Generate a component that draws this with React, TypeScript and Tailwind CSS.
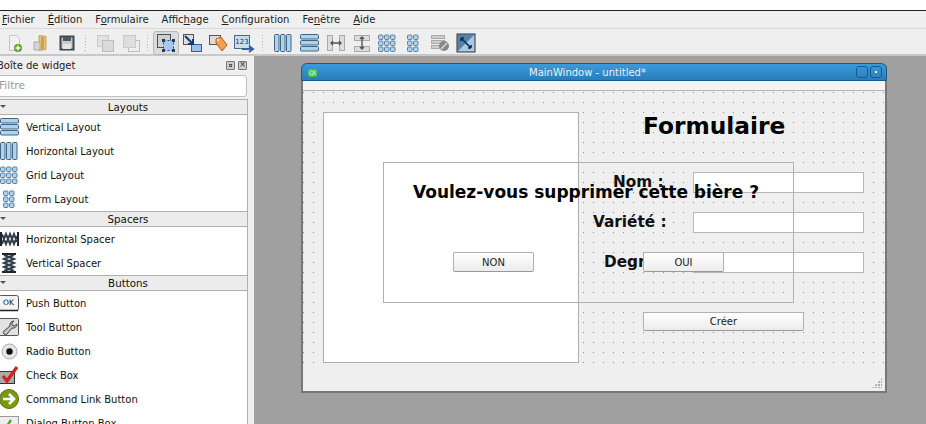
import React from "react";

const S = ({ children, w = 20, h = 20, vb }: { children: React.ReactNode; w?: number; h?: number; vb?: string }) => (
  <svg width={w} height={h} viewBox={vb ?? `0 0 ${w} ${h}`} className="shrink-0">{children}</svg>
);

const VLayout = () => (
  <S>
    {[1, 7, 13].map((y) => <rect key={y} x="0.5" y={y + 0.5} width="18" height="4.5" rx="1" fill="#a9d4f2" stroke="#47627c" />)}
  </S>
);
const HLayout = () => (
  <S>
    {[0, 6, 12].map((x) => <rect key={x} x={x + 0.5} y="1.5" width="4.5" height="17" rx="1" fill="#a9d4f2" stroke="#47627c" />)}
  </S>
);
const Grid = ({ cols = 3, rows = 3, sx }: { cols?: number; rows?: number; sx?: number }) => {
  const cells = [] as React.ReactNode[];
  const start = sx ?? (cols === 3 ? 0 : 3);
  for (let c = 0; c < cols; c++) for (let r = 0; r < rows; r++)
    cells.push(<rect key={`${c}-${r}`} x={start + c * 6 + 0.5} y={1.5 + r * 6 + 0.5} width="4.5" height="4.5" rx="1" fill="#a9d4f2" stroke="#64809a" />);
  return <S>{cells}</S>;
};
const HSpacer = () => (
  <S>
    <rect x="0" y="3" width="2" height="14" fill="#222" /><rect x="17" y="3" width="2" height="14" fill="#222" />
    <path d="M2 5l4 10 4-10 4 10 3-8M2 15l4-10 4 10 4-10 3 8" fill="none" stroke="#2e3d4c" strokeWidth="2" />
  </S>
);
const VSpacer = () => (
  <S>
    <rect x="2" y="0" width="14" height="2" fill="#222" /><rect x="2" y="18" width="14" height="2" fill="#222" />
    <path d="M4 2l10 4-10 4 10 4-10 4M14 2L4 6l10 4-10 4 10 4" fill="none" stroke="#2e3d4c" strokeWidth="2" />
  </S>
);
const PushBtn = () => (
  <S>
    <rect x="-1.5" y="2.5" width="20" height="15" rx="2" fill="#f3f3f3" stroke="#555" />
    <path d="M-1 17.5h19" stroke="#222" strokeWidth="1.5" />
    <text x="8.5" y="12" fontSize="7.5" textAnchor="middle" fontFamily="DejaVu Sans" fill="#111">OK</text>
  </S>
);
const ToolBtn = () => (
  <S>
    <rect x="-1.5" y="1.5" width="20" height="17" rx="1" fill="#e2e2e2" stroke="#555" />
    <path d="M14 4a4 4 0 0 0-4 5l-6 5a2 2 0 0 0 3 3l5-6a4 4 0 0 0 5-4l-3 2-2-1 0-2z" fill="#c4c4c4" stroke="#444" />
  </S>
);
const Radio = () => (
  <S>
    <circle cx="9.5" cy="10.5" r="7.5" fill="#e6e6e6" stroke="#aaa" />
    <circle cx="9.5" cy="10.5" r="3.2" fill="#111" />
  </S>
);
const Check = () => (
  <S>
    <rect x="-0.5" y="6.5" width="15" height="12" fill="#aaa" stroke="#333" />
    <path d="M3 11l4 5 10-14" fill="none" stroke="#d32020" strokeWidth="3.2" />
  </S>
);
const CmdLink = () => (
  <S>
    <circle cx="9" cy="10" r="9.5" fill="#7a9a12" stroke="#55700c" />
    <path d="M3 10h10M9 5l5 5-5 5" fill="none" stroke="#fff" strokeWidth="2.6" />
  </S>
);
const DlgBox = () => (
  <S>
    <rect x="-0.5" y="3.5" width="19" height="17" fill="#eee" stroke="#999" />
    <path d="M2 12l3 4 6-9" fill="none" stroke="#4caf20" strokeWidth="2.4" />
    <path d="M11 13l6 6M17 13l-6 6" stroke="#d33" strokeWidth="2" />
  </S>
);

const NewIc = () => (
  <S>
    <path d="M5.5 2.5h7l3 3v12h-10z" fill="#f1f1f1" stroke="#c4c4c4" />
    <circle cx="14" cy="15" r="4" fill="#5da31f" /><path d="M14 12.5v5M11.5 15h5" stroke="#fff" strokeWidth="1.4" />
  </S>
);
const OpenIc = () => (
  <S>
    <path d="M9 2.5l7 1v13l-7 1z" fill="#e8c67a" stroke="#b8a477" />
    <path d="M4 9h6v8H4z" fill="#d4d4d4" stroke="#aaa" /><path d="M11 4h3v12h-3z" fill="#d5a23f" />
  </S>
);
const SaveIc = () => (
  <S>
    <path d="M3.5 3.5h13v13h-13z" fill="#c8ccd0" stroke="#3e4650" strokeWidth="2" />
    <rect x="6" y="4" width="8" height="4" fill="#50585f" /><rect x="6" y="11" width="8" height="5" fill="#e2e4e6" />
  </S>
);
const CopyIc = () => (
  <S>
    <rect x="2.5" y="2.5" width="11" height="11" fill="#e2e2e2" stroke="#c9c9c9" />
    <rect x="7.5" y="7.5" width="11" height="11" fill="#dadada" stroke="#bdbdbd" />
  </S>
);
const PasteIc = () => (
  <S>
    <rect x="7.5" y="7.5" width="11" height="11" fill="#eee" stroke="#bdbdbd" />
    <rect x="2.5" y="2.5" width="12" height="12" fill="#dedede" stroke="#c9c9c9" />
  </S>
);
const EditWidgets = () => (
  <S>
    <rect x="1.5" y="1.5" width="13" height="13" fill="#d0d0d0" stroke="#48505a" />
    <rect x="7.5" y="7.5" width="10" height="10" fill="#a9c8f0" stroke="#2b4a8c" strokeDasharray="2 2" />
    <g fill="#1c3b78"><rect x="6" y="6" width="3" height="3" /><rect x="16" y="6" width="3" height="3" /><rect x="6" y="16" width="3" height="3" /><rect x="16" y="16" width="3" height="3" /></g>
  </S>
);
const Signal = () => (
  <S>
    <rect x="1.5" y="1.5" width="10" height="10" fill="#ddd" stroke="#555" />
    <rect x="9.5" y="11.5" width="10" height="7" fill="#9cc0e8" stroke="#3a5f92" />
    <path d="M3 3l8 8M11 6v5H6" fill="none" stroke="#123a78" strokeWidth="2" />
  </S>
);
const Buddy = () => (
  <S>
    <rect x="1.5" y="2.5" width="11" height="9" fill="#ddd" stroke="#555" />
    <path d="M8 6l5-2 6 8-5 6-6-8z" fill="#f0a050" stroke="#c25a18" />
    <circle cx="10" cy="7" r="1" fill="#fff" />
  </S>
);
const TabOrder = () => (
  <S w={22}>
    <rect x="1.5" y="2.5" width="15" height="13" fill="#c9dcf0" stroke="#4b6a8d" />
    <text x="9" y="11" fontSize="7" textAnchor="middle" fontFamily="DejaVu Sans" fill="#234">123</text>
    <path d="M9 16h10M16 13l4 3-4 3" fill="none" stroke="#2a62b0" strokeWidth="2" />
  </S>
);
const HSplit = () => (
  <S>
    <rect x="1.5" y="2.5" width="5" height="15" fill="#ddd" stroke="#aaa" /><rect x="13.5" y="2.5" width="5" height="15" fill="#ddd" stroke="#aaa" />
    <path d="M5 10h10M7 8l-2 2 2 2M13 8l2 2-2 2" fill="none" stroke="#555" strokeWidth="1.4" />
  </S>
);
const VSplit = () => (
  <S>
    <rect x="2.5" y="2.5" width="15" height="5" fill="#ddd" stroke="#aaa" /><rect x="2.5" y="13.5" width="15" height="5" fill="#ddd" stroke="#aaa" />
    <path d="M10 4v12M8 6l2-2 2 2M8 14l2 2 2-2" fill="none" stroke="#555" strokeWidth="1.4" />
  </S>
);
const BreakIc = () => (
  <S>
    <rect x="1.5" y="2.5" width="13" height="3" fill="#ccc" stroke="#aaa" />
    <rect x="1.5" y="7.5" width="13" height="3" fill="#ccc" stroke="#aaa" />
    <rect x="1.5" y="12.5" width="11" height="3" fill="#ccc" stroke="#aaa" />
    <circle cx="14" cy="13" r="5" fill="#888" /><path d="M11 16l6-6" stroke="#ddd" strokeWidth="1.4" />
  </S>
);
const Adjust = () => (
  <S>
    <rect x="1" y="1" width="18" height="18" fill="#a8c8e8" stroke="#333" />
    <path d="M1 19V1h18z" fill="#38628c" opacity="0.7" />
    <path d="M5 5l10 10M5 5h3M5 5v3M15 15h-3M15 15v-3" stroke="#07304f" strokeWidth="1.6" fill="none" />
  </S>
);

const Dots = ({ cls }: { cls: string }) => (
  <div className={`h-[17px] w-[3px] bg-[radial-gradient(circle_at_0.5px_0.5px,#b5b5b5_0.71px,transparent_0.71px)] bg-[size:3px_3px] ${cls}`} />
);

const Tool = ({ children, active }: { children: React.ReactNode; active?: boolean }) => (
  <div className={active
    ? "w-[26px] h-[24px] flex items-center justify-center rounded-[3px] border border-[#b8b8b8] bg-[#dcdcdc]"
    : "w-[26px] h-[24px] flex items-center justify-center"}>
    {children}
  </div>
);

const U = ({ children }: { children: React.ReactNode }) => <span className="underline">{children}</span>;

const Section = ({ title }: { title: string }) => (
  <div className="relative h-[13px] flex items-center justify-center pl-[12px] pt-[1px] border-y border-[#b0b0b0] bg-[#ececec] text-[10.3px] text-[#111] box-content">
    <span className="absolute left-[3px] top-[5px] w-0 h-0 border-x-[3px] border-x-transparent border-t-[3px] border-t-[#555]" />
    {title}
  </div>
);

const Item = ({ icon, label }: { icon: React.ReactNode; label: string }) => (
  <div className="h-[24px] flex items-center gap-[6px] pl-[3px] text-[10px] text-[#111]">
    {icon}
    <span>{label}</span>
  </div>
);

const Btn = ({ label, cls }: { label: string; cls: string }) => (
  <div className={`absolute flex items-center justify-center rounded-[2px] border border-[#b0b0b0] border-b-[#999] bg-gradient-to-b from-[#ffffff] to-[#ececec] text-[10px] text-[#222] ${cls}`}>
    {label}
  </div>
);

export default function App() {
  return (
    <div className="w-[926px] h-[424px] overflow-hidden flex flex-col bg-[#efefef] font-['DejaVu_Sans',sans-serif]">
      <div className="h-[10px] bg-white border-b border-[#222] box-content" />
      <div className="h-[16px] flex items-center gap-[13px] pl-[2px] pb-[1px] text-[10px] text-[#222] border-b border-[#d8d8d8] box-content">
        <span><U>F</U>ichier</span>
        <span><U>É</U>dition</span>
        <span>F<U>o</U>rmulaire</span>
        <span>Affic<U>h</U>age</span>
        <span><U>C</U>onfiguration</span>
        <span>Fe<U>n</U>être</span>
        <span><U>A</U>ide</span>
      </div>
      <div className="h-[27px] flex items-center pl-[1px] pt-[3px] border-b-2 border-[#c8c8c8]">
        <Tool><NewIc /></Tool>
        <Tool><OpenIc /></Tool>
        <div className="ml-px"><Tool><SaveIc /></Tool></div>
        <Dots cls="ml-[5px] mr-[4px]" />
        <Tool><CopyIc /></Tool>
        <Tool><PasteIc /></Tool>
        <Dots cls="mx-[3px]" />
        <Tool active><EditWidgets /></Tool>
        <Tool><Signal /></Tool>
        <Tool><Buddy /></Tool>
        <Tool><TabOrder /></Tool>
        <Dots cls="ml-[5px] mr-[6px]" />
        <Tool><HLayout /></Tool>
        <Tool><VLayout /></Tool>
        <Tool><HSplit /></Tool>
        <Tool><VSplit /></Tool>
        <Tool><Grid /></Tool>
        <Tool><Grid cols={2} /></Tool>
        <Tool><BreakIc /></Tool>
        <Tool><Adjust /></Tool>
      </div>
      <div className="flex-1 flex min-h-0">
        <div className="w-[254px] shrink-0 overflow-hidden">
          <div className="-ml-[3px] w-[252px] flex flex-col">
            <div className="h-[17px] pt-[1px] flex items-center justify-between text-[10px] text-[#222] pr-[2px]">
              <span>Boîte de widget</span>
              <span className="flex gap-[3px]">
                <span className="w-[9px] h-[9px] border border-[#777] bg-[#ccc] rounded-[1px] flex items-center justify-center"><span className="w-[3px] h-[3px] border border-[#555]" /></span>
                <span className="w-[9px] h-[9px] border border-[#777] bg-[#ccc] rounded-[1px] flex items-center justify-center text-[8px] leading-none text-[#333]">×</span>
              </span>
            </div>
            <div className="h-[22px] mt-[2px] mr-[2px] flex items-center bg-white border border-[#c0c0c0] rounded-[3px] pl-[1px] text-[10.6px] text-[#999]">Filtre</div>
            <div className="mt-[2px] border-r border-[#b0b0b0] bg-white h-[400px] mr-[1px]">
              <Section title="Layouts" />
              <Item icon={<VLayout />} label="Vertical Layout" />
              <Item icon={<HLayout />} label="Horizontal Layout" />
              <Item icon={<Grid />} label="Grid Layout" />
              <Item icon={<Grid cols={2} />} label="Form Layout" />
              <Section title="Spacers" />
              <Item icon={<HSpacer />} label="Horizontal Spacer" />
              <Item icon={<VSpacer />} label="Vertical Spacer" />
              <Section title="Buttons" />
              <Item icon={<PushBtn />} label="Push Button" />
              <Item icon={<ToolBtn />} label="Tool Button" />
              <Item icon={<Radio />} label="Radio Button" />
              <Item icon={<Check />} label="Check Box" />
              <Item icon={<CmdLink />} label="Command Link Button" />
              <Item icon={<DlgBox />} label="Dialog Button Box" />
            </div>
          </div>
        </div>
        <div className="flex-1 relative bg-[#a0a0a0] overflow-hidden">
          <div className="absolute left-[47px] top-[7px] w-[586px] h-[330px] flex flex-col bg-[#efefef] border-x-2 border-b-2 border-[#777] rounded-t-[6px]">
            <div className="-mx-[2px] h-[18px] shrink-0 relative flex items-center justify-center pr-[13px] rounded-t-[6px] bg-gradient-to-b from-[#3a9bdc] to-[#2a7dba] border border-[#1a5a8a] text-[10px] text-[#e8f2f8]">
              <span className="absolute left-[6px] top-[5px] w-[9px] h-[8px] rounded-[2px] bg-[#4ec24e] text-[6px] leading-[8px] text-center text-[#dff]">Qt</span>
              MainWindow - untitled*
              <span className="absolute right-[18px] top-[2px] w-[12px] h-[12px] rounded-[3px] border border-[#1a5a8a]" />
              <span className="absolute right-[4px] top-[2px] w-[12px] h-[12px] rounded-[3px] border border-[#1a5a8a] flex items-center justify-center"><span className="w-[2px] h-[2px] bg-white" /></span>
            </div>
            <div className="h-[9px] shrink-0 bg-[#f4f4f4] border-b border-[#b5b5b5] box-content" />
            <div className="relative flex-1">
              <div className="absolute inset-x-0 top-0 h-[272px] bg-[radial-gradient(circle_at_0.5px_1.5px,#8c8c8c_0.71px,transparent_0.71px)] bg-[size:10px_10px]" />
              <div className="absolute left-[20px] top-[21px] w-[256px] h-[251px] bg-white border border-[#b0b0b0]" />
              <div className="absolute left-[340px] top-[21px] text-[23.3px] leading-[28px] font-bold text-black">Formulaire</div>
              <div className="absolute left-[310px] top-[81px] text-[15.3px] leading-[20px] font-bold text-[#111]">Nom :</div>
              <div className="absolute left-[290px] top-[121px] text-[15.3px] leading-[20px] font-bold text-[#111]">Variété :</div>
              <div className="absolute left-[301px] top-[161px] text-[15.3px] leading-[20px] font-bold text-[#111]">Degré :</div>
              <div className="absolute left-[390px] top-[81px] w-[171px] h-[21px] bg-white border border-[#b8b8b8] rounded-[1px]" />
              <div className="absolute left-[390px] top-[121px] w-[171px] h-[21px] bg-white border border-[#b8b8b8] rounded-[1px]" />
              <div className="absolute left-[390px] top-[161px] w-[171px] h-[21px] bg-white border border-[#b8b8b8] rounded-[1px]" />
              <Btn label="Créer" cls="left-[340px] top-[221px] w-[161px] h-[19px]" />
              <div className="absolute left-[80px] top-[71px] w-[411px] h-[141px] border border-[#b0b0b0]" />
              <div className="absolute left-[110px] top-[91px] text-[17px] leading-[20px] font-bold text-black whitespace-nowrap">Voulez-vous supprimer cette bière ?</div>
              <Btn label="NON" cls="left-[150px] top-[161px] w-[81px] h-[20px]" />
              <Btn label="OUI" cls="left-[340px] top-[161px] w-[81px] h-[20px]" />
              <div className="absolute right-[3px] bottom-[3px] w-[10px] h-[10px] bg-[radial-gradient(circle_at_1px_1px,#aaa_0.71px,transparent_0.71px)] bg-[size:3px_3px] [clip-path:polygon(100%_0,100%_100%,0_100%)]" />
            </div>
          </div>
        </div>
      </div>
    </div>
  );
}
